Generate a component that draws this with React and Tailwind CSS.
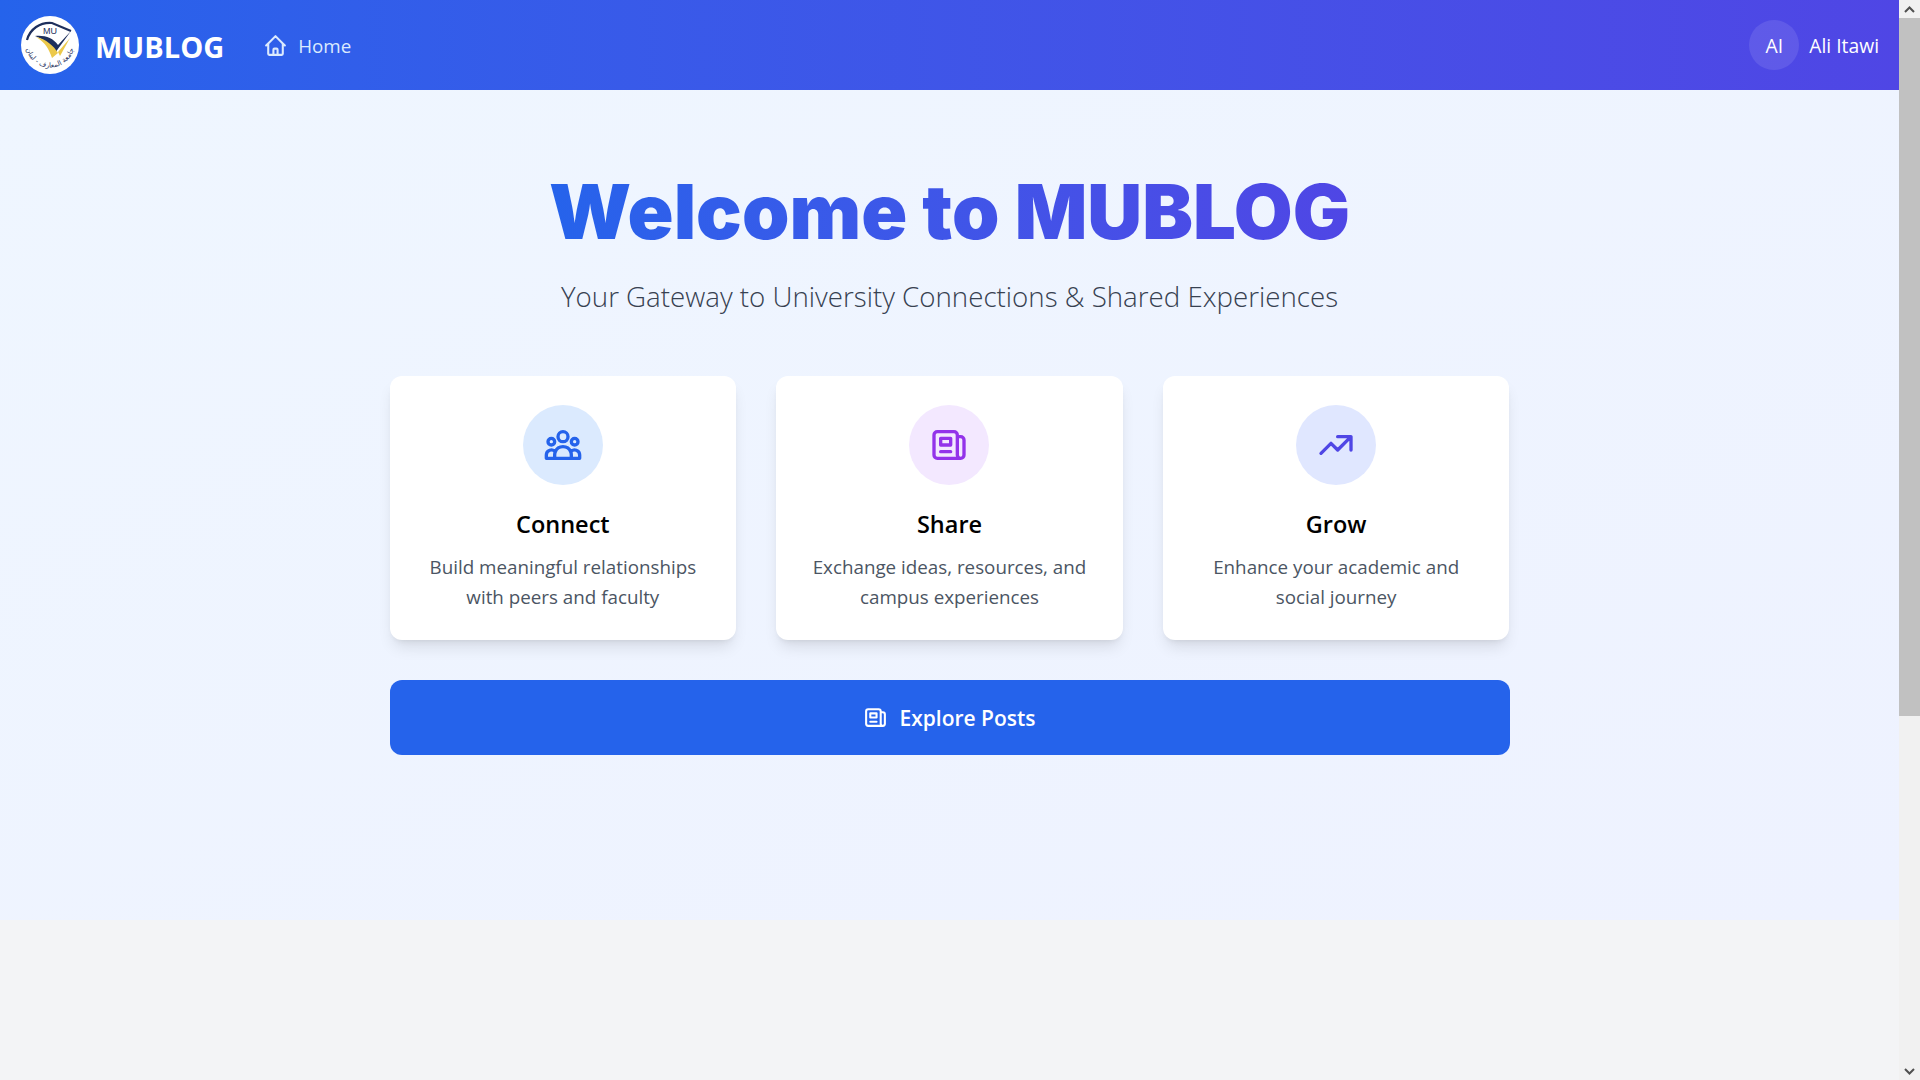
import { HiOutlineHome, HiOutlineUserGroup, HiOutlineNewspaper, HiOutlineTrendingUp } from "react-icons/hi";

const cards = [
    { title: 'Connect', line1: 'Build meaningful relationships', line2: 'with peers and faculty', Icon: HiOutlineUserGroup, circle: 'bg-[#dbeafe]', color: 'text-[#2563eb]' },
    { title: 'Share', line1: 'Exchange ideas, resources, and', line2: 'campus experiences', Icon: HiOutlineNewspaper, circle: 'bg-[#f3e8ff]', color: 'text-[#9333ea]' },
    { title: 'Grow', line1: 'Enhance your academic and', line2: 'social journey', Icon: HiOutlineTrendingUp, circle: 'bg-[#e0e7ff]', color: 'text-[#4f46e5]' },
]

function Logo() {
    return (
        <svg width="58" height="58" viewBox="0 0 58 58">
            <defs>
                <path id="logo-ring" d="M4.5 27 A24.5 24.5 0 1 0 53.5 27" />
            </defs>
            <circle cx="29" cy="29" r="29" fill="white" />
            <path d="M6 24 C9 13 19 6 31 7 L50 15" fill="none" stroke="#1e2f5c" strokeWidth="2.2" />
            <text x="29" y="18" textAnchor="middle" fontSize="9" fill="#1e2f5c" fontFamily="Liberation Sans, sans-serif">MU</text>
            <path d="M14 20 C24 19 32 22 37 29 L50 15 L34 37 C31 30 24 24 14 20 Z" fill="#1e2f5c" />
            <path d="M15 21 C24 26 28 33 31 42 L37 37 C33 30 25 23 15 21 Z" fill="#ecc94b" />
            <path d="M37 36 L49 22 L39 40 Z" fill="#ecc94b" />
            <text fontSize="7" fill="#1e2f5c" fontFamily="DejaVu Sans, sans-serif">
                <textPath href="#logo-ring" startOffset="50%" textAnchor="middle">جامعة المعارف - لبنان</textPath>
            </text>
        </svg>
    )
}

function Navbar() {
    return (
        <div className="h-[90px] flex items-center justify-between pl-[21px] pr-[20px] text-white bg-gradient-to-r from-[#2563eb] to-[#4f46e5]">
            <div className="flex items-center">
                <Logo />
                <h1 className="ml-4 text-[29px] font-bold leading-none pt-[2px]">MUBLOG</h1>
                <a className="ml-[39px] flex items-center gap-[10px] text-[#dbeafe]">
                    <HiOutlineHome className="w-[25px] h-[25px]" />
                    <span className="text-[18.8px] leading-none pt-[2px]">Home</span>
                </a>
            </div>
            <div className="flex items-center gap-[10px]">
                <div className="w-[50px] h-[50px] rounded-full bg-white/10 flex items-center justify-center text-[19.3px] pt-[2px]">AI</div>
                <span className="text-[19.3px] pt-[2px]">Ali Itawi</span>
            </div>
        </div>
    )
}

function Card({ title, line1, line2, Icon, circle, color }) {
    return (
        <div className="bg-white rounded-xl shadow-lg h-[264px] pt-[29px] flex flex-col items-center">
            <div className={`w-20 h-20 rounded-full flex items-center justify-center ${circle}`}>
                <Icon className={`w-10 h-10 ${color}`} />
            </div>
            <h3 className="mt-[23px] text-[23.5px] font-semibold leading-8 text-black">{title}</h3>
            <p className="mt-[12px] text-[18.8px] leading-[30px] text-[#4b5563] text-center">
                {line1}<br />{line2}
            </p>
        </div>
    )
}

export default function App() {
    return (
        <div className="h-[1080px] overflow-hidden flex bg-[#f3f4f6] font-['Open_Sans','Noto_Sans',sans-serif]">
            <div className="flex-1">
                <Navbar />
                <div className="h-[830px] bg-gradient-to-br from-[#eff6ff] to-[#eef2ff] flex flex-col items-center pt-[76px]">
                    <h1 className="font-['Inter',sans-serif] text-[76px] leading-[90px] font-black bg-gradient-to-r from-[#2563eb] to-[#4f46e5] bg-clip-text text-transparent">Welcome to MUBLOG</h1>
                    <p className="mt-[22px] text-[27.7px] leading-9 font-light text-[#374151]">Your Gateway to University Connections &amp; Shared Experiences</p>
                    <div className="mt-[62px] w-[1120px] grid grid-cols-3 gap-10">
                        {cards.map((c, index) => (
                            <Card key={index} {...c} />
                        ))}
                    </div>
                    <button className="mt-10 w-[1120px] h-[75px] rounded-xl bg-[#2563eb] text-white flex items-center justify-center gap-[11px] text-[21px] font-semibold">
                        <HiOutlineNewspaper className="w-[25px] h-[25px]" />
                        <span className="pt-[2px]">Explore Posts</span>
                    </button>
                </div>
            </div>
            {/* scrollbar */}
            <div className="w-[21px] bg-[#f1f1f1] flex flex-col items-center">
                <div className="h-[18px] w-full bg-[#f1f1f1] flex items-center justify-center text-[#505050]">
                    <svg width="11" height="7" viewBox="0 0 11 7"><path d="M1 6l4.5-4.5L10 6" fill="none" stroke="currentColor" strokeWidth="2" /></svg>
                </div>
                <div className="w-full h-[698px] bg-[#c1c1c1]"></div>
                <div className="flex-1"></div>
                <div className="h-[18px] w-full flex items-center justify-center text-[#505050]">
                    <svg width="11" height="7" viewBox="0 0 11 7"><path d="M1 1l4.5 4.5L10 1" fill="none" stroke="currentColor" strokeWidth="2" /></svg>
                </div>
            </div>
        </div>
    )
}
